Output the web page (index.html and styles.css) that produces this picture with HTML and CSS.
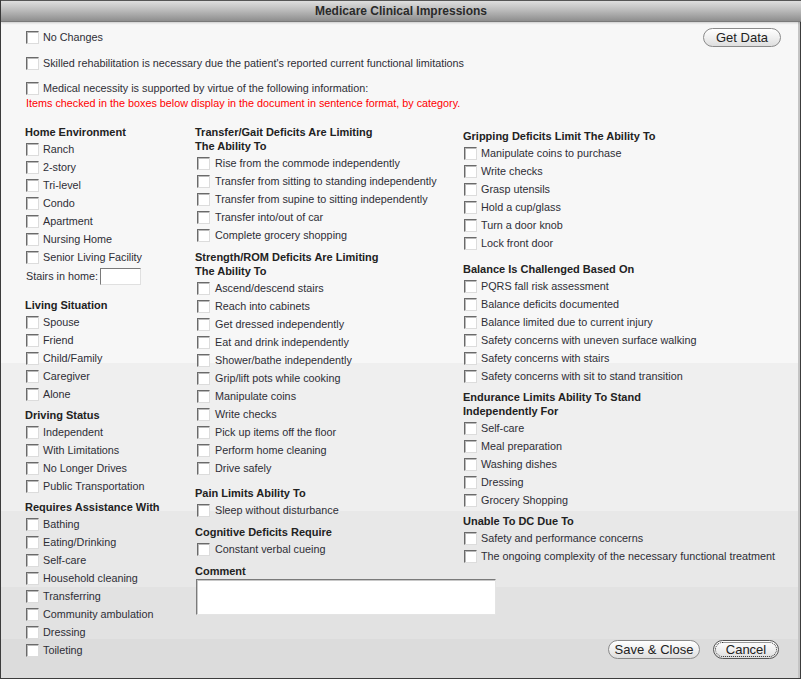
FILE: index.html
```html
<!DOCTYPE html>
<html lang="en">

<head>
    <meta charset="UTF-8">
    <meta name="viewport" content="width=device-width, initial-scale=1.0">
    <title>Medicare Clinical Impressions</title>
    <link rel="stylesheet" href="styles.css">
</head>

<body>
    <div class="dialog">
        <div class="titlebar">Medicare Clinical Impressions</div>

        <div class="top">
            <div class="topRow first">
                <label class="row"><input type="checkbox"> No Changes</label>
                <button class="pill getData">Get Data</button>
            </div>
            <label class="row topRow">
                <input type="checkbox"> Skilled rehabilitation is necessary due the patient's reported current functional limitations
            </label>
            <label class="row topRow medical">
                <input type="checkbox"> Medical necessity is supported by virtue of the following information:
            </label>
            <div class="note">Items checked in the boxes below display in the document in sentence format, by category.</div>
        </div>

        <div class="cols">
            <!-- column 1 -->
            <div class="col col1">
                <div class="sec">
                    <h4>Home Environment</h4>
                    <label class="row"><input type="checkbox"> Ranch</label>
                    <label class="row"><input type="checkbox"> 2-story</label>
                    <label class="row"><input type="checkbox"> Tri-level</label>
                    <label class="row"><input type="checkbox"> Condo</label>
                    <label class="row"><input type="checkbox"> Apartment</label>
                    <label class="row"><input type="checkbox"> Nursing Home</label>
                    <label class="row"><input type="checkbox"> Senior Living Facility</label>
                    <div class="stairs">Stairs in home: <input type="text" class="small"></div>
                </div>
                <div class="sec living">
                    <h4>Living Situation</h4>
                    <label class="row"><input type="checkbox"> Spouse</label>
                    <label class="row"><input type="checkbox"> Friend</label>
                    <label class="row"><input type="checkbox"> Child/Family</label>
                    <label class="row"><input type="checkbox"> Caregiver</label>
                    <label class="row"><input type="checkbox"> Alone</label>
                </div>
                <div class="sec driving">
                    <h4>Driving Status</h4>
                    <label class="row"><input type="checkbox"> Independent</label>
                    <label class="row"><input type="checkbox"> With Limitations</label>
                    <label class="row"><input type="checkbox"> No Longer Drives</label>
                    <label class="row"><input type="checkbox"> Public Transportation</label>
                </div>
                <div class="sec requires">
                    <h4>Requires Assistance With</h4>
                    <label class="row"><input type="checkbox"> Bathing</label>
                    <label class="row"><input type="checkbox"> Eating/Drinking</label>
                    <label class="row"><input type="checkbox"> Self-care</label>
                    <label class="row"><input type="checkbox"> Household cleaning</label>
                    <label class="row"><input type="checkbox"> Transferring</label>
                    <label class="row"><input type="checkbox"> Community ambulation</label>
                    <label class="row"><input type="checkbox"> Dressing</label>
                    <label class="row"><input type="checkbox"> Toileting</label>
                </div>
            </div>

            <!-- column 2 -->
            <div class="col col2">
                <div class="sec">
                    <h4>Transfer/Gait Deficits Are Limiting<br>The Ability To</h4>
                    <label class="row"><input type="checkbox"> Rise from the commode independently</label>
                    <label class="row"><input type="checkbox"> Transfer from sitting to standing independently</label>
                    <label class="row"><input type="checkbox"> Transfer from supine to sitting independently</label>
                    <label class="row"><input type="checkbox"> Transfer into/out of car</label>
                    <label class="row"><input type="checkbox"> Complete grocery shopping</label>
                </div>
                <div class="sec strength">
                    <h4>Strength/ROM Deficits Are Limiting<br>The Ability To</h4>
                    <label class="row"><input type="checkbox"> Ascend/descend stairs</label>
                    <label class="row"><input type="checkbox"> Reach into cabinets</label>
                    <label class="row"><input type="checkbox"> Get dressed independently</label>
                    <label class="row"><input type="checkbox"> Eat and drink independently</label>
                    <label class="row"><input type="checkbox"> Shower/bathe independently</label>
                    <label class="row"><input type="checkbox"> Grip/lift pots while cooking</label>
                    <label class="row"><input type="checkbox"> Manipulate coins</label>
                    <label class="row"><input type="checkbox"> Write checks</label>
                    <label class="row"><input type="checkbox"> Pick up items off the floor</label>
                    <label class="row"><input type="checkbox"> Perform home cleaning</label>
                    <label class="row"><input type="checkbox"> Drive safely</label>
                </div>
                <div class="sec pain">
                    <h4>Pain Limits Ability To</h4>
                    <label class="row"><input type="checkbox"> Sleep without disturbance</label>
                </div>
                <div class="sec cognitive">
                    <h4>Cognitive Deficits Require</h4>
                    <label class="row"><input type="checkbox"> Constant verbal cueing</label>
                </div>
                <div class="sec comment">
                    <h4>Comment</h4>
                    <textarea></textarea>
                </div>
            </div>

            <!-- column 3 -->
            <div class="col col3">
                <div class="sec gripping">
                    <h4>Gripping Deficits Limit The Ability To</h4>
                    <label class="row"><input type="checkbox"> Manipulate coins to purchase</label>
                    <label class="row"><input type="checkbox"> Write checks</label>
                    <label class="row"><input type="checkbox"> Grasp utensils</label>
                    <label class="row"><input type="checkbox"> Hold a cup/glass</label>
                    <label class="row"><input type="checkbox"> Turn a door knob</label>
                    <label class="row"><input type="checkbox"> Lock front door</label>
                </div>
                <div class="sec balance">
                    <h4>Balance Is Challenged Based On</h4>
                    <label class="row"><input type="checkbox"> PQRS fall risk assessment</label>
                    <label class="row"><input type="checkbox"> Balance deficits documented</label>
                    <label class="row"><input type="checkbox"> Balance limited due to current injury</label>
                    <label class="row"><input type="checkbox"> Safety concerns with uneven surface walking</label>
                    <label class="row"><input type="checkbox"> Safety concerns with stairs</label>
                    <label class="row"><input type="checkbox"> Safety concerns with sit to stand transition</label>
                </div>
                <div class="sec endurance">
                    <h4>Endurance Limits Ability To Stand<br>Independently For</h4>
                    <label class="row"><input type="checkbox"> Self-care</label>
                    <label class="row"><input type="checkbox"> Meal preparation</label>
                    <label class="row"><input type="checkbox"> Washing dishes</label>
                    <label class="row"><input type="checkbox"> Dressing</label>
                    <label class="row"><input type="checkbox"> Grocery Shopping</label>
                </div>
                <div class="sec unable">
                    <h4>Unable To DC Due To</h4>
                    <label class="row"><input type="checkbox"> Safety and performance concerns</label>
                    <label class="row"><input type="checkbox"> The ongoing complexity of the necessary functional treatment</label>
                </div>
                <div class="actions">
                    <button class="pill save">Save &amp; Close</button>
                    <button class="pill focused">Cancel</button>
                </div>
            </div>
        </div>
    </div>
</body>

</html>
```

FILE: styles.css
```css
* {
    box-sizing: border-box;
}
body {
    margin: 0;
    font-family: "Liberation Sans", Arial, sans-serif;
    font-size: 10.8px;
    color: #2e2e36;
}
.dialog {
    width: 801px;
    height: 679px;
    border: 1px solid #3c3c3c;
    border-top: 0;
    box-shadow: inset -2px 0 0 #c4c4c4;
    display: flex;
    flex-direction: column;
    background: linear-gradient(to bottom,
        #f7f7f7 0, #f7f7f7 363px,
        #efefef 363px, #efefef 511px,
        #e8e8e8 511px, #e8e8e8 587px,
        #e2e2e2 587px, #e2e2e2 639px,
        #dcdcdc 639px);
}
.titlebar {
    height: 22px;
    border-top: 1px solid #555;
    border-bottom: 1px solid #7a7a7a;
    background: linear-gradient(#dedede, #bcbcbc 45%, #8e8e8e);
    box-shadow: 0 1px 2px rgba(0, 0, 0, 0.18);
    text-align: center;
    font-size: 12px;
    font-weight: bold;
    line-height: 20px;
    color: #2a2a2a;
    margin-right: -1px;
}

/* top checkboxes */
.top {
    padding: 5px 19px 0 24px;
}
.topRow {
    margin-bottom: 7px;
}
.first {
    display: flex;
    justify-content: space-between;
    align-items: center;
}
.medical {
    margin-bottom: 0;
}
.note {
    color: #f00;
    line-height: 12px;
    margin-left: 1px;
}

/* columns */
.cols {
    flex: 1;
    display: grid;
    grid-template-columns: 170px 268px 1fr;
    padding: 16px 0 17px 24px;
}
.col {
    display: flex;
    flex-direction: column;
}
h4 {
    margin: 0 0 1px;
    font-size: 11px;
    line-height: 14px;
    color: #222;
}
.row {
    display: flex;
    align-items: center;
    height: 18px;
    white-space: nowrap;
}
input[type=checkbox] {
    appearance: none;
    -webkit-appearance: none;
    width: 13px;
    height: 13px;
    margin: 0 4px 0 1px;
    flex: none;
    background: #fff;
    border: 1px solid;
    border-color: #6a6a6a #dcdcdc #dcdcdc #6a6a6a;
    box-shadow: inset 1px 1px 0 #b9b9b9;
}
.col2 input[type=checkbox] {
    margin: 0 5px 0 2px;
}
.stairs {
    display: flex;
    align-items: center;
    height: 20px;
    margin-left: 1px;
}
input.small {
    width: 41px;
    height: 17px;
    margin-left: 2px;
    border: 1px solid;
    border-color: #7a7a7a #e0e0e0 #e0e0e0 #7a7a7a;
    background: #fff;
}
.living { margin-top: 12px; }
.driving { margin-top: 5px; }
.requires { margin-top: 5px; }
.strength { margin-top: 6px; }
.pain { margin-top: 9px; }
.cognitive { margin-top: 6px; }
.comment { margin-top: 6px; }
.gripping { margin-top: 4px; }
.balance { margin-top: 10px; }
.endurance { margin-top: 5px; }
.unable { margin-top: 5px; }
textarea {
    display: block;
    width: 300px;
    height: 36px;
    margin: 1px 0 0 1px;
    resize: none;
    background: #fff;
    border: 1px solid;
    border-color: #7a7a7a #e4e4e4 #e4e4e4 #7a7a7a;
    box-shadow: inset 1px 1px 0 #c8c8c8;
}

/* buttons */
.pill {
    height: 19px;
    padding: 0;
    border: 1px solid #8a8a8a;
    border-radius: 10px;
    background: linear-gradient(#ffffff, #f0f0f0 50%, #dedede);
    font-family: "Liberation Sans", Arial, sans-serif;
    font-size: 13px;
    line-height: 16px;
    color: #222;
    white-space: nowrap;
}
.getData {
    width: 78px;
    margin-top: 1px;
}
.actions {
    margin-top: auto;
    display: flex;
    justify-content: flex-end;
    gap: 13px;
    padding-right: 21px;
    margin-bottom: 2px;
}
.save {
    width: 92px;
}
.focused {
    width: 66px;
    border-color: #555;
    outline: 1px dotted #333;
    outline-offset: -3px;
}
```
